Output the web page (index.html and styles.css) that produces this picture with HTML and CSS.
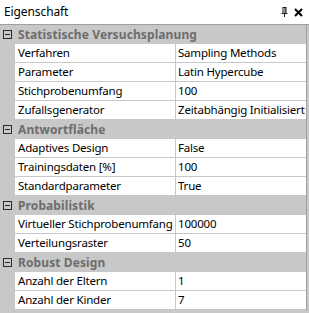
FILE: index.html
```html
<!DOCTYPE html>
<html>
<head>
<meta charset="utf-8">
<link rel="stylesheet" href="styles.css">
</head>
<body>
<div class="panel">
  <div class="titlebar">
    <span class="title">Eigenschaft</span>
    <span class="tools">
      <svg class="pin" width="7" height="10" viewBox="0 0 7 10"><path d="M1.5 0.5h4M2 1v5M5 1v5M4 1v5M0.5 6.5h6M3.5 7v3" stroke="#1a1a1a" stroke-width="1" fill="none"/></svg>
      <svg class="close" width="9" height="9" viewBox="0 0 9 9"><path d="M1 1L8 8M8 1L1 8" stroke="#000" stroke-width="2" fill="none"/></svg>
    </span>
  </div>
  <div class="grid">
    <div class="cat"><span class="exp"></span><span class="catname">Statistische Versuchsplanung</span></div>
    <div class="row"><span class="gut"></span><span class="name">Verfahren</span><span class="val">Sampling Methods</span></div>
    <div class="row"><span class="gut"></span><span class="name">Parameter</span><span class="val">Latin Hypercube</span></div>
    <div class="row"><span class="gut"></span><span class="name">Stichprobenumfang</span><span class="val">100</span></div>
    <div class="row"><span class="gut"></span><span class="name">Zufallsgenerator</span><span class="val">Zeitabhängig Initialisiert</span></div>
    <div class="cat"><span class="exp"></span><span class="catname">Antwortfläche</span></div>
    <div class="row"><span class="gut"></span><span class="name">Adaptives Design</span><span class="val">False</span></div>
    <div class="row"><span class="gut"></span><span class="name">Trainingsdaten [%]</span><span class="val">100</span></div>
    <div class="row"><span class="gut"></span><span class="name">Standardparameter</span><span class="val">True</span></div>
    <div class="cat"><span class="exp"></span><span class="catname">Probabilistik</span></div>
    <div class="row"><span class="gut"></span><span class="name">Virtueller Stichprobenumfang</span><span class="val">100000</span></div>
    <div class="row"><span class="gut"></span><span class="name">Verteilungsraster</span><span class="val">50</span></div>
    <div class="cat"><span class="exp"></span><span class="catname">Robust Design</span></div>
    <div class="row"><span class="gut"></span><span class="name">Anzahl der Eltern</span><span class="val">1</span></div>
    <div class="row"><span class="gut"></span><span class="name">Anzahl der Kinder</span><span class="val">7</span></div>
  </div>
</div>
</body>
</html>
```
FILE: styles.css
```css
html, body {
  margin: 0;
  padding: 0;
  background: #ffffff;
}
.panel {
  width: 309px;
  height: 313px;
  display: flex;
  flex-direction: column;
  font-family: "Noto Sans", "Open Sans", sans-serif;
  font-size: 11.5px;
  letter-spacing: -0.2px;
  color: #000;
  background: #c8c8c8;
  overflow: hidden;
}
.titlebar {
  height: 24px;
  flex: none;
  background: #fff;
  border-bottom: 1px solid #a0a0a0;
  display: flex;
  align-items: center;
  justify-content: space-between;
  padding: 0 6px 0 4px;
}
.title {
  line-height: 24px;
  font-size: 12px;
  letter-spacing: -0.1px;
}
.tools {
  display: flex;
  align-items: center;
  gap: 6px;
}
.grid {
  display: flex;
  flex-direction: column;
  margin-right: 2px;
  border-right: 1px solid #a0a0a0;
  background: #c8c8c8;
}
.cat, .row {
  height: 18px;
  border-bottom: 1px solid #c8c8c8;
  display: flex;
  align-items: center;
  white-space: nowrap;
}
.cat {
  background: #c8c8c8;
}
.exp {
  width: 7px;
  height: 7px;
  border: 1px solid #2a2a30;
  margin: 0 6px 0 3px;
  position: relative;
  flex: none;
}
.exp::after {
  content: "";
  position: absolute;
  left: 1px;
  right: 1px;
  top: 3px;
  height: 1px;
  background: #2a2a30;
}
.catname {
  font-weight: bold;
  font-size: 12px;
  letter-spacing: 0.1px;
  color: #6d6d6d;
}
.gut {
  width: 15px;
  height: 19px;
  flex: none;
  background: #c8c8c8;
}
.name {
  width: 157px;
  height: 18px;
  line-height: 18px;
  padding-left: 3px;
  background: #fff;
  border-right: 1px solid #c8c8c8;
  overflow: hidden;
  flex: none;
}
.val {
  flex: 1;
  height: 18px;
  line-height: 18px;
  padding-left: 2px;
  background: #fff;
  overflow: hidden;
}
```
